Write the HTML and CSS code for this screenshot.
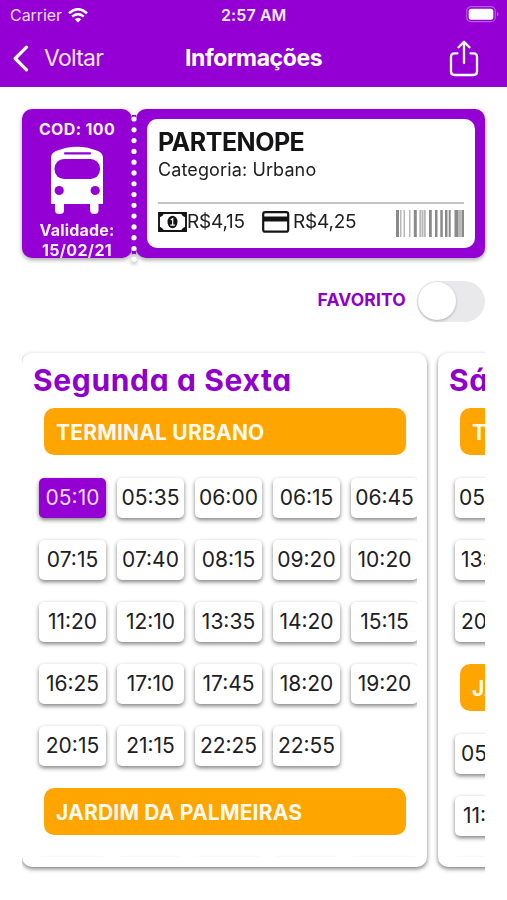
FILE: index.html
```html
<!DOCTYPE html>
<html lang="pt-BR">
<head>
<meta charset="utf-8">
<title>Informações</title>
<link rel="stylesheet" href="styles.css">
</head>
<body>
<header class="header">
  <div class="status">
    <span class="carrier"><span class="carrier-name">Carrier</span>
      <svg width="20" height="15" viewBox="0 0 20 15" fill="none" stroke="#fff" stroke-width="2.5"><path d="M1 5.2Q10-2.8 19 5.2M4.2 8.6Q10 3.6 15.8 8.6"/><path d="M6.8 11.2Q10 8.6 13.2 11.2L10 14.5Z" fill="#fff" stroke="none"/></svg>
    </span>
    <span class="clock">2:57 AM</span>
    <svg class="battery" width="33" height="17" viewBox="0 0 33 17"><rect x=".7" y=".7" width="28.6" height="15" rx="4.5" fill="none" stroke="#b45cdf" stroke-width="1.2"/><rect x="2.7" y="2.7" width="24.6" height="11" rx="2.5" fill="#fff"/><path d="M31 6v4.500q1.500-.7 1.500-2.250T31 6" fill="#b45cdf"/></svg>
  </div>
  <nav class="nav">
    <a class="back"><svg width="17" height="27" viewBox="0 0 17 27" fill="none" stroke="#fff" stroke-width="3.200" stroke-linecap="round" stroke-linejoin="round"><path d="M14.500 2.200 3.200 13.500l11.300 11.300"/></svg><span class="back-text">Voltar</span></a>
    <h1 class="title">Informações</h1>
    <svg class="share" width="30" height="38" viewBox="0 0 30 38" fill="none" stroke="#fff" stroke-width="2.300" stroke-linecap="round" stroke-linejoin="round"><path d="M8.500 13.300H5.500Q2 13.300 2 16.800V31.500Q2 35 5.500 35H24.500Q28 35 28 31.500V16.800Q28 13.300 24.500 13.300H21.500M15 23V2M9.500 7.200 15 1.700l5.500 5.500"/></svg>
  </nav>
</header>
<main class="main">
  <section class="ticket">
    <div class="stub">
      <span class="code">COD: 100</span>
      <svg class="bus" width="54" height="69" viewBox="0 0 54 69"><path fill="#fff" d="M1 12Q1 7 6 5Q27-3.500 48 5Q53 7 53 12V58H48.500V64.500Q48.500 68 44.500 68T40 64.500V58H14V64.500Q14 68 9.500 68T5 64.500V58H1Z"/><rect x="14" y="6.200" width="27" height="2.300" rx="1.100" fill="#9400d3"/><rect x="4.500" y="13" width="45.500" height="20" rx="9.500" fill="#9400d3"/><circle cx="9.200" cy="44.500" r="4.600" fill="#9400d3"/><circle cx="45.200" cy="44.500" r="4.600" fill="#9400d3"/></svg>
      <span class="valid">Validade:</span>
      <span class="date">15/02/21</span>
    </div>
    <div class="tear"><svg width="6" height="150" viewBox="0 0 6 150"><path d="M3 4V148" stroke="#fff" stroke-width="5.200" stroke-linecap="round" stroke-dasharray="0.010 10.780" fill="none"/></svg></div>
    <div class="body">
      <div class="info">
        <h2 class="line-name">PARTENOPE</h2>
        <p class="category">Categoria: Urbano</p>
        <div class="fares">
          <svg width="29" height="20" viewBox="0 0 29 20"><path fill="none" stroke="#141414" stroke-width="1.900" d="M1 1H28V19H1Z"/><path fill="#141414" d="M1 1h5q-1 3.500-5 4.500zM28 1h-5q1 3.500 5 4.500zM1 19h5q-1-3.500-5-4.500zM28 19h-5q1-3.500 5-4.500z"/><ellipse cx="14.500" cy="10" rx="5" ry="6.200" fill="#141414"/><path d="M12.700 8 14.700 6.700v6.300M12.300 13.200h4.600" fill="none" stroke="#fff" stroke-width="1.200"/></svg>
          <span class="cash">R$4,15</span>
          <svg class="card-icon" width="28" height="22" viewBox="0 0 28 22"><rect x="1.200" y="1.200" width="25" height="19.500" rx="2" fill="none" stroke="#141414" stroke-width="2.200"/><path fill="#141414" d="M1 5.500h25.500V10.500H1z"/></svg>
          <span class="cash">R$4,25</span>
          <svg class="barcode" width="68" height="27" viewBox="0 0 68 27" fill="#8a8a8a"><path d="M0 0h3v27H0zM17.800 0h3v27h-3zM33 0h2.800v27H33zM39 0h2.500v27H39zM44.300 0h2.500v27h-2.500zM49 0h2.500v27H49zM52.700 0h2v27h-2zM58.500 0h3.500v27h-3.500zM65.500 0h2.500v27h-2.500z"/><path fill="#b8b8b8" d="M4 0h1.500v27H4zM7.500 0h1.500v27H7.500zM13 0h1.500v27H13zM23.300 0h6.500v27h-6.500zM62 0h3.500v27H62z"/><path fill="#eee" d="M25 0h.6v27H25zM27.300 0h.6v27h-.6z"/></svg>
        </div>
      </div>
    </div>
  </section>
  <div class="favorite"><span class="favorite-text">FAVORITO</span><span class="switch"><span class="knob"></span></span></div>
  <section class="days">
    <article class="day">
      <h2 class="day-name">Segunda a Sexta</h2>
      <div class="list">
        <h3 class="stop">TERMINAL URBANO</h3>
        <div class="times"><span class="time active">05:10</span><span class="time">05:35</span><span class="time">06:00</span><span class="time">06:15</span><span class="time">06:45</span><span class="time">07:15</span><span class="time">07:40</span><span class="time">08:15</span><span class="time">09:20</span><span class="time">10:20</span><span class="time">11:20</span><span class="time">12:10</span><span class="time">13:35</span><span class="time">14:20</span><span class="time">15:15</span><span class="time">16:25</span><span class="time">17:10</span><span class="time">17:45</span><span class="time">18:20</span><span class="time">19:20</span><span class="time">20:15</span><span class="time">21:15</span><span class="time">22:25</span><span class="time">22:55</span></div>
        <h3 class="stop">JARDIM DA PALMEIRAS</h3>
        <div class="times"><span class="time"></span><span class="time"></span><span class="time"></span><span class="time"></span><span class="time"></span></div>
      </div>
    </article>
    <article class="day">
      <h2 class="day-name">Sá</h2>
      <div class="list">
        <h3 class="stop">T</h3>
        <div class="times single"><span class="time">05</span><span class="time inset">13:</span><span class="time inset">20</span></div>
        <h3 class="stop">JA</h3>
        <div class="times single"><span class="time inset">05</span><span class="time inset-more">11:</span><span class="time"></span></div>
      </div>
    </article>
  </section>
</main>
</body>
</html>
```
FILE: styles.css
```css
* { box-sizing: border-box; margin: 0; padding: 0; }
body { width: 507px; height: 900px; overflow: hidden; background: #fff; color: #202022; font-family: Inter, "Liberation Sans", sans-serif; }
svg { display: block; flex: none; }
span, h1, h2, h3, p { white-space: nowrap; }
.header { height: 87px; background: #9400d3; color: #fff; }
.status { height: 30px; padding: 0 8px 0 10px; display: grid; grid-template-columns: 211px 1fr auto; align-items: center; }
.battery { margin-top: -2px; }
.carrier { display: flex; align-items: center; gap: 6px; font-size: 16px; color: #f0dcf8; }
.carrier-name { letter-spacing: -.05px; }
.clock { font-size: 16px; font-weight: 600; letter-spacing: .1px; color: #f8edfc; }
.nav { height: 57px; padding: 0 28px 0 12px; display: grid; grid-template-columns: 173px 1fr auto; align-items: center; }
.back { display: flex; align-items: center; gap: 15px; font-size: 23px; color: #f3e2fa; margin-top: -1px; }
.back-text { letter-spacing: -.75px; }
.title { font-size: 23px; font-weight: 700; letter-spacing: -.4px; margin-top: -1px; }
.main { padding: 22px 22px 0; }
.ticket { height: 149px; display: flex; filter: drop-shadow(0 2px 2px rgba(0,0,0,.35)); }
.stub { width: 110px; border-radius: 10px; background: #9400d3; color: #fbf0ff; padding-top: 10px; display: flex; flex-direction: column; align-items: center; font-size: 16px; line-height: 20px; font-weight: 700; letter-spacing: .35px; }
.bus { margin: 7px 0 5px; }
.valid { letter-spacing: .2px; }
.tear { width: 4px; margin: 6px 0 0; background: linear-gradient(#9400d3, #9400d3) 0 0 / 4px 139px no-repeat; }
.tear svg { margin: 0 -1px; position: relative; }
.body { width: 349px; border-radius: 10px; background: #9400d3; padding: 10px 10px 10px 11px; }
.info { height: 129px; background: #fff; border-radius: 10px; padding: 8px 11px 0; }
.line-name { font-size: 25px; line-height: 30px; font-weight: 700; letter-spacing: -.5px; color: #141416; }
.category { font-size: 18px; line-height: 26px; letter-spacing: .12px; }
.fares { margin-top: 19px; border-top: 2px solid #c3c3c7; padding-top: 5px; height: 35px; display: flex; align-items: center; }
.cash { font-size: 19px; letter-spacing: -.2px; margin-top: -4px; }
.card-icon { margin: 0 3px 0 17px; }
.fares > svg { margin-top: -3px; }
.fares > .barcode { margin: 0 0 0 auto; }
.favorite { margin-top: 22px; height: 42px; display: flex; justify-content: flex-end; align-items: center; gap: 11px; }
.favorite-text { font-size: 17.500px; font-weight: 700; color: #8f00cc; margin-top: -3px; letter-spacing: .15px; }
.switch { width: 68px; height: 41px; border-radius: 21px; background: #e9e9eb; padding: 1px; }
.knob { display: block; width: 38px; height: 38px; border-radius: 50%; background: #fff; box-shadow: 0 1px 3px rgba(0,0,0,.25); }
.days { margin-top: 23px; height: 530px; padding-top: 8px; overflow: hidden; display: flex; gap: 11px; }
.day { flex: none; width: 405px; height: 514px; border-radius: 10px; background: #fff; box-shadow: 0 2px 4px rgba(0,0,0,.5); padding: 9px 10px 0 11px; }
.day-name { height: 36px; font-size: 30px; line-height: 36px; font-weight: 700; letter-spacing: .65px; color: #8f00cc; font-feature-settings: "cv11"; }
.list { height: 459px; overflow: hidden; padding-top: 10px; }
.stop { width: 362px; height: 47px; margin-left: 11px; padding-left: 12px; border-radius: 10px; background: #ffa500; color: #fffaf0; font-size: 21px; line-height: 49px; font-weight: 700; letter-spacing: .2px; }
.times { padding: 23px 0 22px 6px; display: grid; grid-template-columns: repeat(5, 67px); gap: 22px 11px; }
.times.single { grid-template-columns: 67px; }
.time { height: 40px; border-radius: 5px; background: #fff; box-shadow: 0 2px 4px rgba(0,0,0,.5); font-size: 21px; line-height: 40px; text-align: center; }
.time.active { background: #9400d3; color: #f3dcfb; }
.single .time { text-align: left; padding-left: 4px; }
.single .inset { padding-left: 6px; }
.single .inset-more { padding-left: 8px; }
```
